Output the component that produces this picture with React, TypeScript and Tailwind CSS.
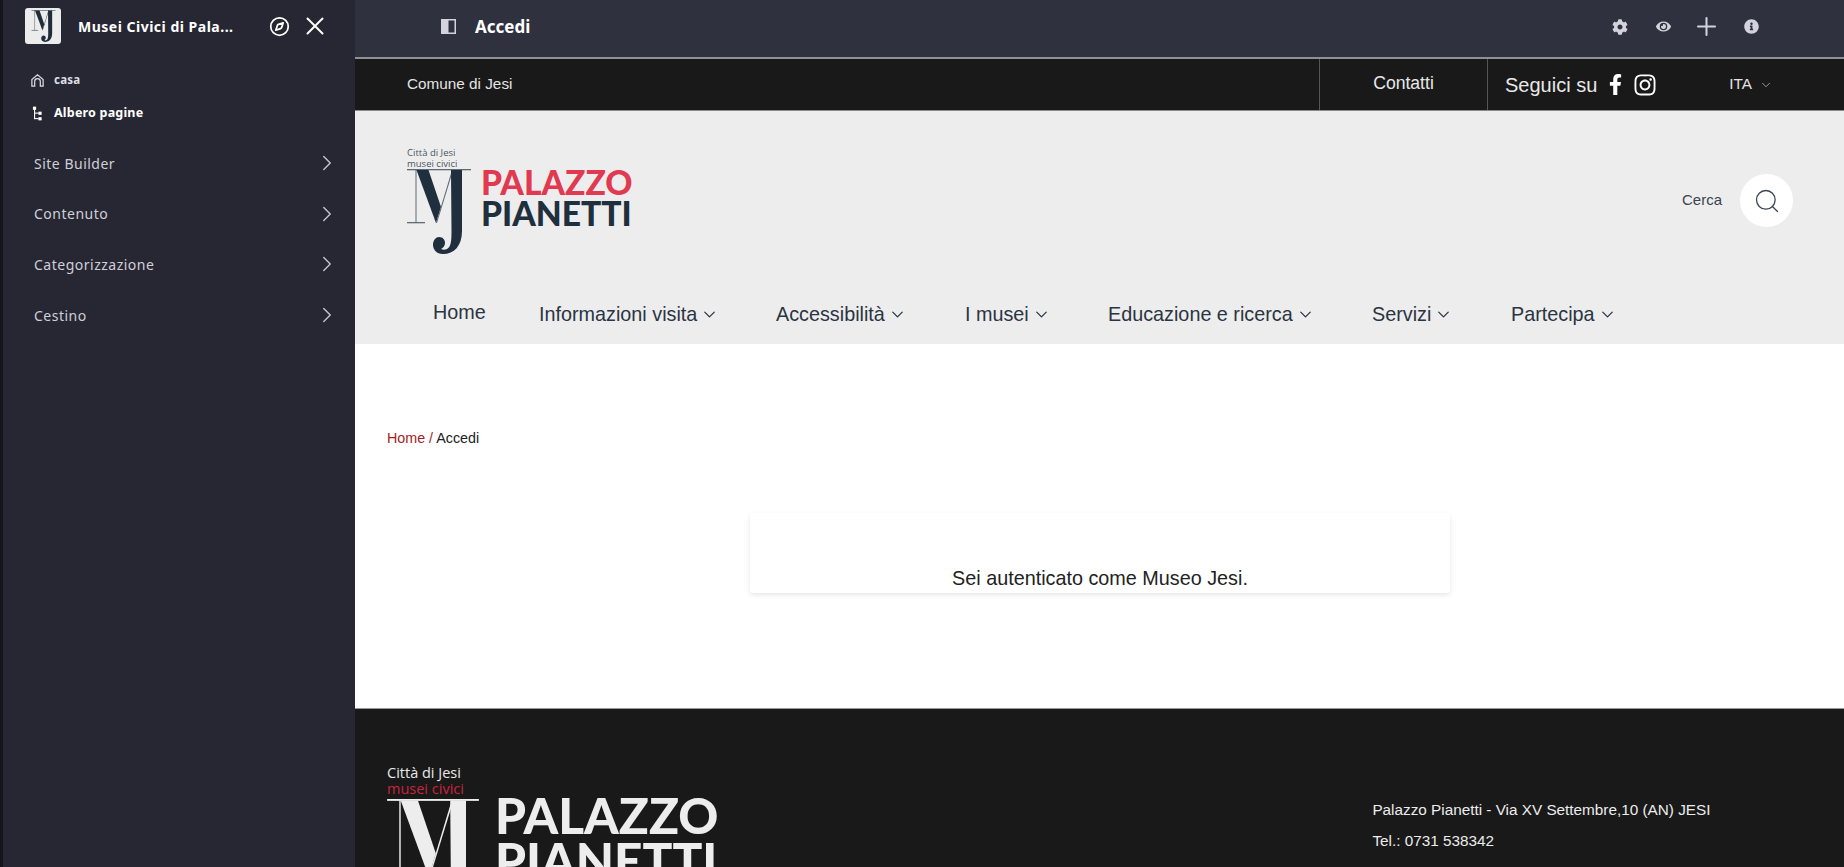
import { ChevronDown, ChevronRight, Compass, Plus, Search, X } from "lucide-react";
import { FaFacebookF, FaInstagram, FaCog, FaInfoCircle, FaEye } from "react-icons/fa";

const menu = ["Site Builder", "Contenuto", "Categorizzazione", "Cestino"];

const nav = [
  { label: "Informazioni visita", w: "w-[237px]" },
  { label: "Accessibilità", w: "w-[189px]" },
  { label: "I musei", w: "w-[143px]" },
  { label: "Educazione e ricerca", w: "w-[264px]" },
  { label: "Servizi", w: "w-[139px]" },
  { label: "Partecipa", w: "w-[150px]" },
];

function MjMark({ fill, line }: { fill: string; line: string }) {
  return (
    <svg viewBox="0 0 64 85" className="h-full w-full" fill={fill}>
      <rect x="0" y="0" width="64" height="1.3" fill={line} />
      <rect x="0" y="53" width="18" height="1.3" fill={line} />
      <rect x="8.5" y="0" width="1" height="54" fill={line} />
      <path d="M9.5 1 L21.5 1 L34 38 L29 54 Z" />
      <path d="M29 54 L45 1 L46.2 1 L30 54 Z" fill={line} />
      <path d="M44 1 L55 1 L55 62 C55 77 47 85 36 85 C29 85 26 80 26 76 C26 71 29 68 32 68 C36 68 38 71 38 74 C38 77 36 79 34 80 C36 81 38 81 40 80 C44 78 44.5 72 44.5 62 Z" />
    </svg>
  );
}

export default function App() {
  return (
    <div className="flex h-screen w-full overflow-hidden bg-white font-['Liberation_Sans',sans-serif]">
      <aside className="flex h-full w-[355px] shrink-0 flex-col border-l-[3px] border-[#15151b] bg-[#272733] font-['Noto_Sans',sans-serif]">
        <div className="flex h-[52px] items-center pl-[22px]">
          <div className="flex h-[36px] w-[36px] items-center justify-center rounded-[3px] bg-[#ececec]">
            <div className="h-[32px] w-[25px]">
              <MjMark fill="#1f2d3a" line="#1f2d3a" />
            </div>
          </div>
          <span className="ml-[17px] w-[161px] truncate text-[14px] font-bold tracking-[0.5px] text-white">Musei Civici di Pala...</span>
          <Compass size={21} strokeWidth={2} className="ml-[30px] text-white" />
          <X size={30} strokeWidth={1.6} className="ml-[10px] text-white" />
        </div>
        <div className="mt-[20px] flex h-[16px] items-center pl-[27px] text-[11.5px] font-bold tracking-[0.2px] text-[#dcdce4]">
          <svg viewBox="0 0 16 16" className="h-[15px] w-[15px]" fill="none" stroke="currentColor" strokeWidth="1.3">
            <path d="M2 14V7l6-5 6 5v7h-3V9a3 3 0 0 0-6 0v5z" />
          </svg>
          <span className="ml-[9px]">casa</span>
        </div>
        <div className="mt-[17px] flex h-[16px] items-center pl-[29px] text-[12.5px] font-bold tracking-[0.2px] text-white">
          <svg viewBox="0 0 12 16" className="h-[15px] w-[11px]" fill="currentColor">
            <rect x="1" y="0.5" width="3.5" height="3.5" />
            <rect x="2.2" y="3" width="1.2" height="11" />
            <rect x="2.2" y="7" width="5" height="1.2" />
            <rect x="2.2" y="13" width="5" height="1.2" />
            <rect x="7" y="6" width="3.5" height="3.5" />
            <rect x="7" y="12" width="3.5" height="3.5" />
          </svg>
          <span className="ml-[11px]">Albero pagine</span>
        </div>
        <ul className="mt-[17px] flex flex-col">
          {menu.map((item) => (
            <li key={item} className="flex h-[50.6px] items-center justify-between pl-[31px] pr-[15px] text-[14px] text-[#cfcfd8]">
              <span className="tracking-[0.5px]">{item}</span>
              <ChevronRight size={26} strokeWidth={1.3} className="text-[#c4c4cc]" />
            </li>
          ))}
        </ul>
      </aside>

      <main className="flex min-w-0 flex-1 flex-col">
        <div className="flex h-[59px] shrink-0 items-center border-b-[2px] border-[#8f8f96] bg-[#30313f] pb-[4px] pl-[86px] pr-[85px]">
          <svg viewBox="0 0 15 15" className="h-[15px] w-[15px]">
            <rect width="15" height="15" fill="#d3d3de" />
            <rect x="7.5" y="1.5" width="6" height="12" fill="#30313f" />
          </svg>
          <span className="ml-[19px] font-['Noto_Sans',sans-serif] text-[17px] font-bold text-white">Accedi</span>
          <div className="ml-auto flex items-center text-[#d3d3de]">
            <FaCog size={16} />
            <FaEye size={15} className="ml-[28px]" />
            <Plus size={29} strokeWidth={1.7} className="ml-[21px]" />
            <FaInfoCircle size={15} className="ml-[23px]" />
          </div>
        </div>

        <div className="flex h-[52px] shrink-0 items-stretch border-b border-[#8a8a8a] bg-[#191919] text-white">
          <span className="flex items-center pl-[52px] text-[15.3px] text-[#e4e4e4]">Comune di Jesi</span>
          <div className="ml-auto flex w-[169px] items-start justify-center border-x border-[#555] pt-[12px] text-[17.6px] leading-[24px] text-[#e8e8e8]">
            Contatti
          </div>
          <div className="flex w-[356px] items-center pl-[17px]">
            <span className="text-[20px] text-[#e8e8e8]">Seguici su</span>
            <FaFacebookF size={21} className="ml-[8px]" />
            <FaInstagram size={24} className="ml-[7px]" />
            <span className="ml-[72px] text-[15.3px] text-[#e4e4e4]">ITA</span>
            <ChevronDown size={14} strokeWidth={1.5} className="ml-[7px] text-[#aaa]" />
          </div>
        </div>

        <header className="flex h-[233px] shrink-0 flex-col bg-[#ededed] shadow-[0_1px_2px_rgba(0,0,0,0.05)]">
          <div className="flex flex-1 items-start pl-[52px] pr-[51px] pt-[36px]">
            <div className="flex">
              <div className="flex w-[64px] flex-col">
                <span className="h-[11px] font-['Open_Sans',sans-serif] text-[9.5px] leading-[11px] text-[#4a5560]">Città di Jesi</span>
                <span className="h-[11px] font-['Open_Sans',sans-serif] text-[9.5px] leading-[11px] text-[#4a5560]">musei civici</span>
                <div className="h-[85px] w-[64px]">
                  <MjMark fill="#1f2f3e" line="#5f6a74" />
                </div>
              </div>
              <div className="ml-[10px] mt-[20px] flex flex-col font-['Lato',sans-serif] font-black">
                <span className="text-[33.6px] leading-[31px] text-[#e13a50]">PALAZZO</span>
                <span className="text-[33.6px] leading-[31px] text-[#1f2f3e]">PIANETTI</span>
              </div>
            </div>
            <div className="ml-auto mt-[27px] flex items-center">
              <span className="text-[15px] text-[#3b4450]">Cerca</span>
              <div className="ml-[18px] flex h-[53px] w-[53px] items-center justify-center rounded-full bg-white text-[#3b4450]">
                <Search size={28} strokeWidth={1.1} />
              </div>
            </div>
          </div>
          <nav className="flex h-[47px] items-start pl-[78px] text-[19.8px] text-[#2a3442]">
            <span className="w-[106px] pt-[1px]">Home</span>
            {nav.map((n) => (
              <div key={n.label} className={`flex items-center pt-[3px] ${n.w}`}>
                <span>{n.label}</span>
                <ChevronDown size={19} strokeWidth={1.6} className="ml-[3px]" />
              </div>
            ))}
          </nav>
        </header>

        <section className="flex h-[364px] shrink-0 flex-col bg-white">
          <p className="mt-[85px] pl-[32px] text-[14.3px] leading-[18px] text-[#222]">
            <span className="text-[#a31d24]">Home / </span>Accedi
          </p>
          <div className="ml-[395px] mt-[66px] flex h-[80px] w-[700px] items-end justify-center rounded-[3px] bg-white text-[19.8px] leading-[30px] text-[#222] shadow-[0_2px_5px_rgba(0,0,0,0.1)]">
            Sei autenticato come Museo Jesi.
          </div>
        </section>

        <footer className="flex flex-1 items-start border-t border-[#999] bg-[#191919] pl-[32px]">
          <div className="flex pt-[56px]">
            <div className="flex w-[92px] flex-col">
              <span className="font-['Open_Sans',sans-serif] text-[14.5px] leading-[16px] text-[#e8e8e8]">Città di Jesi</span>
              <span className="font-['Open_Sans',sans-serif] text-[14.5px] leading-[16px] text-[#c8243c]">musei civici</span>
              <div className="mt-[2px] h-[122px] w-[92px]">
                <MjMark fill="#ededed" line="#ededed" />
              </div>
            </div>
            <div className="ml-[16px] mt-[28px] flex flex-col font-['Lato',sans-serif] font-black text-[#ededed]">
              <span className="text-[49.5px] leading-[45px]">PALAZZO</span>
              <span className="text-[49.5px] leading-[45px]">PIANETTI</span>
            </div>
          </div>
          <div className="ml-[654px] flex flex-col gap-[13px] pt-[92px] text-[15.3px] leading-[18px] text-[#ececec]">
            <span>Palazzo Pianetti - Via XV Settembre,10 (AN) JESI</span>
            <span>Tel.: 0731 538342</span>
            <span>Fax: 0731 538328</span>
          </div>
        </footer>
      </main>
    </div>
  );
}
